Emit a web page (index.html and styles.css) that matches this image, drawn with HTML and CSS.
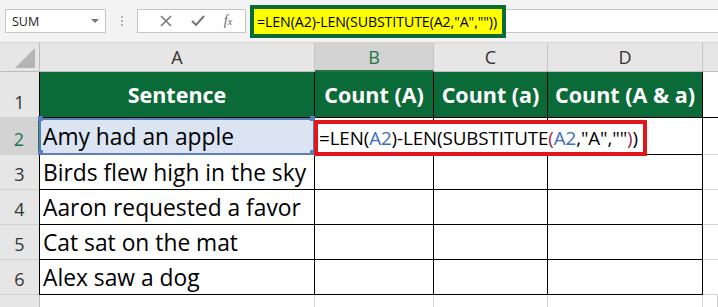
FILE: index.html
```html
<!DOCTYPE html>
<html lang="en">
<head>
    <meta charset="UTF-8">
    <title>Count A</title>
    <link rel="stylesheet" href="styles.css">
</head>
<body>

<div class="toolbar">
    <div class="name-box">
        <span>SUM</span>
        <span class="caret"></span>
    </div>
    <div class="grip"><i></i><i></i><i></i></div>
    <div class="fx-box">
        <svg width="14" height="14" viewBox="0 0 14 14"><path d="M2 2 L12 12 M12 2 L2 12" stroke="#7a7a7a" stroke-width="1.6" fill="none"/></svg>
        <svg width="16" height="14" viewBox="0 0 16 14"><path d="M2 7 L6 11 L14 2" stroke="#7a7a7a" stroke-width="2.2" fill="none"/></svg>
        <span class="fx">f<sub>x</sub></span>
    </div>
    <div class="formula-bar">
        <div class="formula-hl">=LEN(A2)-LEN(SUBSTITUTE(A2,"A",""))</div>
    </div>
</div>

<div class="sheet">
    <div class="corner"><span class="tri"></span></div>
    <div class="col-head">A</div>
    <div class="col-head active">B</div>
    <div class="col-head">C</div>
    <div class="col-head">D</div>
    <div class="col-head blank"></div>

    <div class="row-head">1</div>
    <div class="cell head first">Sentence</div>
    <div class="cell head">Count (A)</div>
    <div class="cell head">Count (a)</div>
    <div class="cell head">Count (A &amp; a)</div>
    <div class="cell empty"></div>

    <div class="row-head active">2</div>
    <div class="cell first ref">Amy had an apple</div>
    <div class="cell editing">
        <div class="editor">=LEN(<span class="r1">A2</span>)-LEN(SUBSTITUTE<span class="p2">(</span><span class="r1">A2</span>,"A",""<span class="p2">)</span>)</div>
    </div>
    <div class="cell"></div>
    <div class="cell"></div>
    <div class="cell empty"></div>

    <div class="row-head">3</div>
    <div class="cell first">Birds flew high in the sky</div>
    <div class="cell"></div>
    <div class="cell"></div>
    <div class="cell"></div>
    <div class="cell empty"></div>

    <div class="row-head">4</div>
    <div class="cell first">Aaron requested a favor</div>
    <div class="cell"></div>
    <div class="cell"></div>
    <div class="cell"></div>
    <div class="cell empty"></div>

    <div class="row-head">5</div>
    <div class="cell first">Cat sat on the mat</div>
    <div class="cell"></div>
    <div class="cell"></div>
    <div class="cell"></div>
    <div class="cell empty"></div>

    <div class="row-head">6</div>
    <div class="cell first">Alex saw a dog</div>
    <div class="cell"></div>
    <div class="cell"></div>
    <div class="cell"></div>
    <div class="cell empty"></div>

    <div class="row-head last"></div>
    <div class="cell blank-row"></div>
    <div class="cell blank-row"></div>
    <div class="cell blank-row"></div>
    <div class="cell blank-row"></div>
    <div class="cell blank-row empty"></div>
</div>

</body>
</html>
```

FILE: styles.css
```css
body {
    margin: 0;
    padding: 0;
    width: 718px;
    height: 307px;
    overflow: hidden;
    background-color: #ffffff;
    font-family: "Open Sans", Arial, sans-serif;
    color: #000;
}

/* barra de fórmulas */
.toolbar {
    height: 43px;
    background-color: #f3f3f3;
    border-bottom: 1px solid #d6d6d6;
    box-sizing: border-box;
    display: flex;
    align-items: center;
    padding-left: 5px;
}

.name-box {
    width: 101px;
    height: 24px;
    box-sizing: border-box;
    background-color: white;
    border: 1px solid #c6c6c6;
    display: flex;
    align-items: center;
    justify-content: space-between;
    padding: 0 6px 0 6px;
    font-size: 12.5px;
    color: #222;
}

.caret {
    width: 0;
    height: 0;
    border-left: 4px solid transparent;
    border-right: 4px solid transparent;
    border-top: 4px solid #777;
}

.grip {
    width: 31px;
    display: flex;
    flex-direction: column;
    align-items: center;
    gap: 2px;
}

.grip i {
    width: 2px;
    height: 2px;
    background-color: #b0b0b0;
}

.fx-box {
    width: 109px;
    height: 24px;
    box-sizing: border-box;
    background-color: white;
    border: 1px solid #c6c6c6;
    display: flex;
    align-items: center;
    justify-content: space-around;
    padding: 0 4px 0 12px;
}

.fx {
    font-family: "Liberation Serif", serif;
    font-style: italic;
    font-size: 14px;
    color: #666;
    line-height: 1;
}

.fx sub {
    font-size: 10px;
    vertical-align: 0;
}

.formula-bar {
    flex-grow: 1;
    height: 24px;
    margin-left: 5px;
    background-color: white;
    border-top: 1px solid #c6c6c6;
    border-bottom: 1px solid #c6c6c6;
    box-sizing: border-box;
    display: flex;
    align-items: center;
}

.formula-hl {
    height: 33px;
    width: 256px;
    box-sizing: border-box;
    background-color: #ffff00;
    border: 4px solid #0b6b34;
    display: flex;
    align-items: center;
    padding-left: 3px;
    font-size: 14.2px;
    letter-spacing: -0.1px;
    white-space: nowrap;
    margin-left: -1px;
}

/* planilha */
.sheet {
    display: grid;
    grid-template-columns: 40px 275px 119px 114px 155px 1fr;
    grid-template-rows: 29px 46px 37px 35px 35px 35px 35px 1fr;
    height: 264px;
}

.corner {
    background-color: #e6e6e6;
    border-right: 1px solid #bdbdbd;
    border-bottom: 1px solid #bdbdbd;
    position: relative;
}

.tri {
    position: absolute;
    right: 4px;
    bottom: 3px;
    width: 0;
    height: 0;
    border-left: 20px solid transparent;
    border-bottom: 20px solid #b4b4b4;
}

.col-head {
    background-color: #e6e6e6;
    border-right: 1px solid #c4c4c4;
    border-bottom: 1px solid #bdbdbd;
    display: flex;
    align-items: center;
    justify-content: center;
    font-size: 18px;
    color: #333;
}

.col-head.active {
    background-color: #d3d3d3;
    color: #217346;
    border-bottom: 2px solid #217346;
}

.col-head.blank {
    border-right: none;
}

.row-head {
    background-color: #e6e6e6;
    border-right: 1px solid #bdbdbd;
    border-bottom: 1px solid #d0d0d0;
    display: flex;
    align-items: flex-end;
    justify-content: center;
    padding-bottom: 3px;
    box-sizing: border-box;
    font-size: 18px;
    color: #333;
}

.row-head.active {
    background-color: #d3d3d3;
    color: #217346;
    border-right: 2px solid #217346;
}

.row-head.last {
    border-bottom: none;
}

.cell {
    border-right: 1px solid #000;
    border-bottom: 1px solid #000;
    display: flex;
    align-items: center;
    padding-left: 3px;
    font-size: 22.8px;
    white-space: nowrap;
    position: relative;
}

.cell.first {
    border-left: 1px solid #000;
    margin-left: -1px;
}

.cell.head {
    background-color: #0b6b38;
    color: white;
    font-weight: bold;
    font-size: 21.5px;
    justify-content: center;
    padding-left: 0;
}

.cell.empty {
    border-right: none;
    border-bottom: 1px solid #d4d4d4;
}

.cell.head + .cell.empty {
    border-bottom: 1px solid #000;
}

.cell.blank-row {
    border-right: 1px solid #d4d4d4;
    border-bottom: none;
}

.cell.ref {
    background-color: #dbe4f3;
    outline: 2px solid #5b7fbe;
    outline-offset: -2px;
}

.cell.ref::before {
    content: "";
    position: absolute;
    left: -2px;
    top: -2px;
    width: 5px;
    height: 5px;
    background-color: #5b7fbe;
    box-shadow: 272px 0 0 #5b7fbe, 0 34px 0 #5b7fbe, 272px 34px 0 #5b7fbe;
}

.editor {
    position: absolute;
    left: -1px;
    top: 2px;
    width: 333px;
    height: 36px;
    box-sizing: border-box;
    border: 4px solid #e3151c;
    background-color: white;
    display: flex;
    align-items: center;
    padding-left: 1px;
    font-size: 18.8px;
    letter-spacing: -0.1px;
    z-index: 2;
}

.r1 {
    color: #3d6cc0;
}

.p2 {
    color: #a3234a;
}
```
